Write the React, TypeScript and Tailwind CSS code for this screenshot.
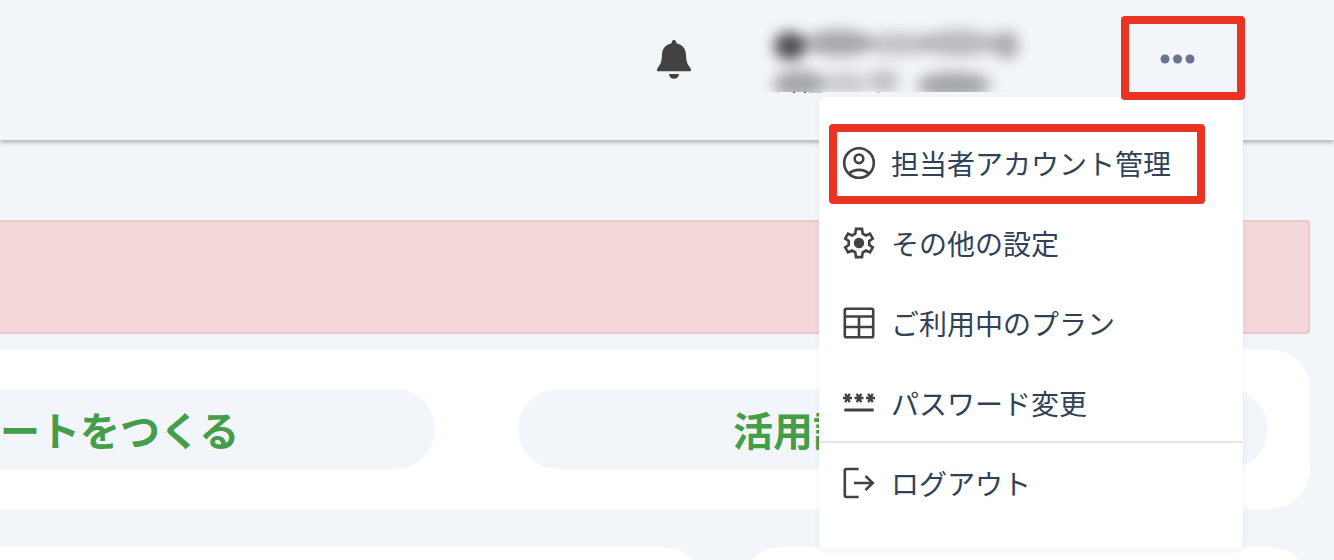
import type { ReactNode } from "react";

function BellIcon() {
  return (
    <svg viewBox="0 0 34 40" className="h-10 w-[34px]" fill="#424242" aria-hidden="true">
      <path d="M17 0C18.700 0 19.400 1.300 19.400 3.300C25.600 4.800 28.700 8.800 29 14.500C29.400 22.500 30 23 33.300 28C34.600 30 34.200 31.300 32.300 31.300H1.700C-.2 31.300-.6 30 .7 28C4 23 4.600 22.500 5 14.500C5.300 8.800 8.400 4.800 14.600 3.300C14.600 1.300 15.300 0 17 0Z" />
      <path d="M12 34H22C21.800 37 20 38.800 17 38.800S12.200 37 12 34Z" />
    </svg>
  );
}

function DotsIcon() {
  return (
    <svg viewBox="0 0 36 12" className="h-3 w-9" fill="#68758c" aria-hidden="true">
      <circle cx="6" cy="7" r="4.500" />
      <circle cx="18.500" cy="7" r="4.500" />
      <circle cx="31" cy="7" r="4.500" />
    </svg>
  );
}

function Icon({ children }: { children: ReactNode }) {
  return (
    <svg
      viewBox="0 0 40 40"
      className="size-10 shrink-0"
      fill="none"
      stroke="#424242"
      strokeWidth="2.600"
      aria-hidden="true"
    >
      {children}
    </svg>
  );
}

const accountIcon = (
  <Icon>
    <circle cx="20" cy="20" r="14.800" />
    <circle cx="20" cy="15.800" r="4.300" />
    <path d="M10 30.500C15.500 25.600 24.500 25.600 30 30.500" />
  </Icon>
);

const gearIcon = (
  <Icon>
    <path
      strokeLinejoin="miter"
      d="M17 5.900H23L23.700 10.600L27 12.500L31 10.600L33.800 15.500L30.300 18V22L33.800 24.500L31 29.400L27 27.500L23.700 29.400L23 34.100H17L16.300 29.400L13 27.500L9 29.400L6.200 24.500L9.700 22V18L6.200 15.500L9 10.600L13 12.500L16.300 10.600Z"
    />
    <circle cx="20" cy="20" r="5.200" fill="#424242" stroke="none" />
  </Icon>
);

const planIcon = (
  <Icon>
    <rect x="5.800" y="5.800" width="28.400" height="28.400" rx="1.500" />
    <path d="M6 13.500H34M6 24H34M20 13.500V34" />
  </Icon>
);

const passwordIcon = (
  <Icon>
    <path
      strokeWidth="2.400"
      d="M4 15H13M6.300 10.800L10.700 19.200M10.700 10.800L6.300 19.200M15.500 15H24.500M17.800 10.800L22.200 19.200M22.200 10.800L17.800 19.200M27 15H36M29.300 10.800L33.700 19.200M33.700 10.800L29.300 19.200"
    />
    <path strokeWidth="3" d="M5.300 27H34.700" />
  </Icon>
);

const logoutIcon = (
  <Icon>
    <path d="M19.600 6H7.500Q5.800 6 5.800 7.700V32.300Q5.800 34 7.500 34H19.600" />
    <path d="M15 20H33.500M26.500 12.800L33.700 20L26.500 27.200" />
  </Icon>
);

function MaskedAccount() {
  return (
    <svg viewBox="0 0 271 78" className="h-[78px] w-[271px] overflow-hidden" aria-hidden="true">
      <defs>
        <filter
          id="soft"
          filterUnits="userSpaceOnUse"
          x="-40"
          y="-40"
          width="350"
          height="160"
          colorInterpolationFilters="sRGB"
        >
          <feGaussianBlur stdDeviation="7" />
        </filter>
        <clipPath id="frame">
          <rect width="271" height="76" />
        </clipPath>
      </defs>
      <g clipPath="url(#frame)">
        <g filter="url(#soft)">
          <ellipse cx="31" cy="30" rx="16" ry="14" fill="#333" fillOpacity=".85" />
          <ellipse cx="80" cy="27" rx="34" ry="13" fill="#666" fillOpacity=".55" />
          <ellipse cx="140" cy="28" rx="34" ry="11" fill="#666" fillOpacity=".36" />
          <ellipse cx="200" cy="27" rx="38" ry="13" fill="#666" fillOpacity=".42" />
          <ellipse cx="247" cy="29" rx="13" ry="14" fill="#666" fillOpacity=".5" />
          <ellipse cx="40" cy="68" rx="26" ry="14" fill="#666" fillOpacity=".55" />
          <ellipse cx="86" cy="67" rx="24" ry="11" fill="#666" fillOpacity=".3" />
          <ellipse cx="125" cy="65" rx="15" ry="12" fill="#666" fillOpacity=".36" />
          <ellipse cx="195" cy="69" rx="37" ry="13" fill="#666" fillOpacity=".56" />
        </g>
      </g>
      <path d="M34 76.500H36M45 76.500H47" stroke="#444" />
      <path d="M50 76.500H63M118 76.500H121M18 76.500H20" stroke="#c4c6ca" />
    </svg>
  );
}

const items = [
  { label: "担当者アカウント管理", icon: accountIcon, style: "h-20 rounded-[4px] border-8 border-[#eb3323] pl-0.5 pb-0.5 mx-2.5 w-[376px]" },
  { label: "その他の設定", icon: gearIcon, style: "h-20 px-5 pb-0.5" },
  { label: "ご利用中のプラン", icon: planIcon, style: "h-20 px-5 pb-0.5" },
  { label: "パスワード変更", icon: passwordIcon, style: "h-[79px] border-b-2 border-slate-200 px-5" },
  { label: "ログアウト", icon: logoutIcon, style: "h-[82px] px-5 pb-0.5" },
];

export default function App() {
  return (
    <div className="h-screen overflow-hidden bg-[#f2f5fa] font-['Noto_Sans_CJK_JP',sans-serif] text-slate-700">
      <header className="relative z-10 flex h-[140px] items-start justify-end bg-[#f2f5fa] pt-4 pr-[89px] shadow-[0_3px_4px_rgba(0,0,0,0.24)]">
        <button type="button" aria-label="通知" className="mt-6 mr-[68px]">
          <BellIcon />
        </button>
        <MaskedAccount />
        <div className="relative ml-[91px]">
          <button
            type="button"
            aria-label="メニュー"
            aria-expanded="true"
            className="relative z-20 flex h-[84px] w-[124px] items-center rounded-[4px] border-8 border-[#eb3323] pl-[30px]"
          >
            <DotsIcon />
          </button>
          <nav className="absolute top-[81px] right-0.5 z-10 w-[424px] rounded-md bg-white pt-[27px] pb-6 shadow-[0_2px_6px_rgba(0,0,0,0.06)]">
            <ul>
              {items.map((item) => (
                <li key={item.label}>
                  <a href="#" className={`flex items-center gap-3 text-[28px] leading-10 ${item.style}`}>
                    {item.icon}
                    <span>{item.label}</span>
                  </a>
                </li>
              ))}
            </ul>
          </nav>
        </div>
      </header>

      <main className="pt-20 pr-6">
        <div role="alert" className="h-[114px] rounded-r-[4px] border-2 border-l-0 border-[#efc8cb] bg-[#f3d7d9]" />

        <section className="mt-[15px] flex gap-[83px] rounded-r-[40px] bg-white py-10 pr-[42px] text-[40px] leading-[80px] font-bold text-[#469d49]">
          <a href="#" className="h-20 w-[435px] rounded-r-full bg-[#f2f5fa]">
            ートをつくる
          </a>
          <a href="#" className="h-20 flex-1 rounded-full bg-[#f2f5fa] pl-[215px]">
            活用記
          </a>
        </section>

        <div className="mt-[38px] flex gap-[37px]">
          <section className="h-40 w-[704px] rounded-tr-[40px] bg-white" />
          <section className="h-40 flex-1 rounded-t-[40px] bg-white" />
        </div>
      </main>
    </div>
  );
}
